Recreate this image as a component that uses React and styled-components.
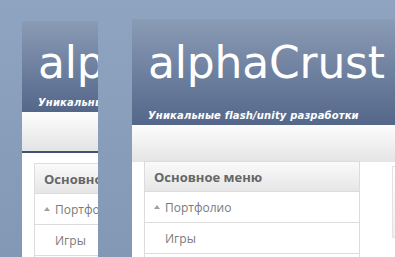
import React from 'react'
import styled, { createGlobalStyle } from 'styled-components'

const Global = createGlobalStyle`
html, body { margin:0; padding:0; }
body { width:395px; height:257px; overflow:hidden; }
`

const Desktop = styled.div`
position:relative;
width:395px;
height:257px;
overflow:hidden;
background:linear-gradient(#8fa4c0, #8398b5);`

const Window = styled.div`
position:absolute;
left:${p => p.$left}px;
top:${p => p.$top}px;
width:${p => p.$width}px;
bottom:-60px;
overflow:hidden;
background:#fff;`

const Page = styled.div`
width:420px;
display:flex;
flex-direction:column;`

const Header = styled.div`
height:${p => p.$height}px;
box-sizing:border-box;
padding:${p => p.$titleTop}px 0 3px 16px;
display:flex;
flex-direction:column;
background:linear-gradient(#8a9bb5, #54678a);
color:#fff;`

const Title = styled.div`
font-family:"DejaVu Sans", Verdana, sans-serif;
font-size:44px;
line-height:44px;
letter-spacing:-0.2px;`

const Tagline = styled.div`
margin-top:auto;
font-family:"DejaVu Sans", Verdana, sans-serif;
font-size:10px;
font-weight:bold;
font-style:italic;
letter-spacing:0.15px;
line-height:12px;`

const Toolbar = styled.div`
height:${p => p.$height}px;
background:linear-gradient(#fdfdfd, #e4e4e4);
border-bottom:${p => p.$line ? '2px solid #3f5274' : 'none'};`

const Content = styled.div`
display:flex;
align-items:flex-start;
gap:32px;
padding:0 0 0 12px;
margin-top:${p => p.$offset}px;`

const Menu = styled.div`
width:214px;
flex:none;
border:1px solid #dcdcdc;
background:#fff;
font-family:"Open Sans", "DejaVu Sans", sans-serif;`

const MenuHeader = styled.div`
height:29px;
display:flex;
align-items:center;
padding-left:9px;
background:linear-gradient(#fafafa, #e6e6e6);
border-bottom:1px solid #dcdcdc;
color:#666;
font-size:13px;
font-weight:bold;`

const MenuItem = styled.div`
height:30px;
display:flex;
align-items:center;
padding-left:9px;
border-bottom:1px solid #dcdcdc;
color:#7a7a7a;
font-size:12px;`

const Arrow = styled.span`
width:11px;
flex:none;
display:flex;
align-items:center;
&::before {
  content:'';
  display:${p => p.$open ? 'block' : 'none'};
  border-left:3.5px solid transparent;
  border-right:3.5px solid transparent;
  border-bottom:4px solid #a0a0a0;
  margin-top:-1px;
}`

const SideBox = styled.div`
width:120px;
height:70px;
margin-top:5px;
border:1px solid #e2e2e2;
background:linear-gradient(#fff, #efefef);`

function SitePage({ header, titleTop, bar, line, offset }) {
    return (
        <Page>
            <Header $height={header} $titleTop={titleTop}>
                <Title>alphaCrust</Title>
                <Tagline>Уникальные flash/unity разработки</Tagline>
            </Header>
            <Toolbar $height={bar} $line={line} />
            <Content $offset={offset}>
                <Menu>
                    <MenuHeader>Основное меню</MenuHeader>
                    <MenuItem><Arrow $open />Портфолио</MenuItem>
                    <MenuItem><Arrow />Игры</MenuItem>
                    <MenuItem />
                </Menu>
                <SideBox />
            </Content>
        </Page>
    )
}

export default function App() {
    return (
        <Desktop>
            <Global />
            <Window $left={22} $top={21} $width={76}>
                <SitePage header={91} titleTop={20} bar={39} line offset={10} />
            </Window>
            <Window $left={132} $top={19} $width={263}>
                <SitePage header={106} titleTop={22} bar={37} offset={-1} />
            </Window>
        </Desktop>
    )
}
